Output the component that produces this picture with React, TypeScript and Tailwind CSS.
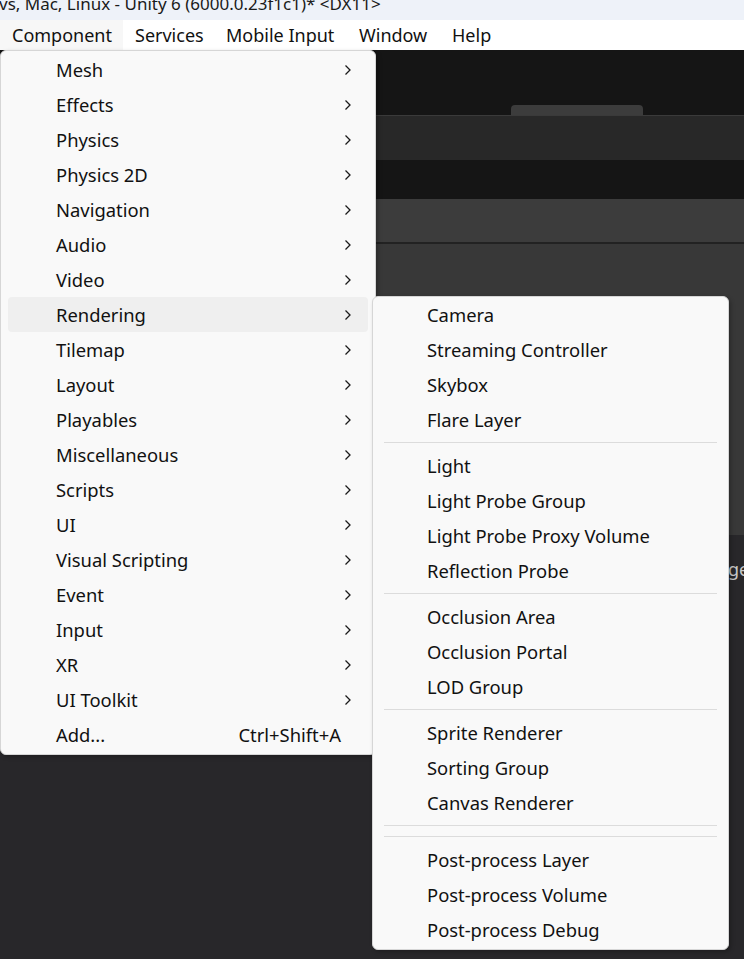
import React from "react";

const mainItems: { label: string; arrow?: boolean; shortcut?: string; active?: boolean }[] = [
  { label: "Mesh", arrow: true },
  { label: "Effects", arrow: true },
  { label: "Physics", arrow: true },
  { label: "Physics 2D", arrow: true },
  { label: "Navigation", arrow: true },
  { label: "Audio", arrow: true },
  { label: "Video", arrow: true },
  { label: "Rendering", arrow: true, active: true },
  { label: "Tilemap", arrow: true },
  { label: "Layout", arrow: true },
  { label: "Playables", arrow: true },
  { label: "Miscellaneous", arrow: true },
  { label: "Scripts", arrow: true },
  { label: "UI", arrow: true },
  { label: "Visual Scripting", arrow: true },
  { label: "Event", arrow: true },
  { label: "Input", arrow: true },
  { label: "XR", arrow: true },
  { label: "UI Toolkit", arrow: true },
  { label: "Add...", shortcut: "Ctrl+Shift+A" },
];

const subGroups: string[][] = [
  ["Camera", "Streaming Controller", "Skybox", "Flare Layer"],
  ["Light", "Light Probe Group", "Light Probe Proxy Volume", "Reflection Probe"],
  ["Occlusion Area", "Occlusion Portal", "LOD Group"],
  ["Sprite Renderer", "Sorting Group", "Canvas Renderer"],
  [],
  ["Post-process Layer", "Post-process Volume", "Post-process Debug"],
];

const font = { fontFamily: '"Noto Sans", "Open Sans", sans-serif' };

function Chevron() {
  return (
    <svg width="8" height="12" viewBox="0 0 8 12" className="shrink-0">
      <polyline points="1.5,1.5 6,6 1.5,10.5" fill="none" stroke="#1a1a1a" strokeWidth="1.3" />
    </svg>
  );
}

function Separator() {
  return (
    <div className="h-[11px] flex items-center px-[11px]">
      <div className="h-px w-full bg-[#dcdcdc]" />
    </div>
  );
}

export default function App() {
  return (
    <div className="relative w-[744px] h-[959px] overflow-hidden bg-[#28272a] text-[#111]" style={font}>
      {/* Title bar */}
      <div className="h-[20px] bg-[#eef2f9] overflow-hidden flex items-start">
        <span className="text-[17px] leading-[20px] -ml-[1px] -mt-[6px] text-[#1a1a1a] whitespace-nowrap">
          vs, Mac, Linux - Unity 6 (6000.0.23f1c1)* &lt;DX11&gt;
        </span>
      </div>
      {/* Menu bar */}
      <div className="h-[30px] bg-white flex items-center text-[18px] text-[#111]">
        <div className="h-full bg-[#f7f7f7] flex items-center pl-[12px] w-[123px]">Component</div>
        <div className="pl-[12px] w-[103px]">Services</div>
        <div className="w-[133px]">Mobile Input</div>
        <div className="w-[93px]">Window</div>
        <div>Help</div>
      </div>
      {/* App background */}
      <div className="flex flex-col">
        <div className="h-[65px] bg-[#151515] flex items-end">
          <div className="ml-[511px] w-[132px] h-[10px] bg-[#3c3c3c] rounded-t-[4px]" />
        </div>
        <div className="h-[45px] bg-[#282828] border-t border-[#3a3a3a]" />
        <div className="h-[39px] bg-[#151515]" />
        <div className="h-[43px] bg-[#3c3c3c]" />
        <div className="h-[2px] bg-[#222]" />
        <div className="h-[291px] bg-[#383838]" />
        <div className="flex-1 h-[424px] flex bg-[#262626]">
          <div className="w-[73px] bg-[#29282b]" />
          <div className="w-[4px] bg-[#222124]" />
          <div className="flex-1 bg-[#29282b]" />
        </div>
      </div>
      <div className="absolute left-[728px] top-[555px] text-[18px] text-[#c8c8c8] leading-[28px]">ge</div>

      {/* Main dropdown */}
      <div className="absolute left-0 top-[50px] w-[376px] bg-[#f9f9f9] border border-[#d6d6d6] rounded-[6px] shadow-[2px_2px_4px_rgba(0,0,0,0.25)] pt-[1px] pb-[2px] text-[18.4px]">
        {mainItems.map((it) => (
          <div
            key={it.label}
            className={
              "h-[35px] mx-[7px] flex items-center pl-[48px] pr-[16px] rounded-[4px] " +
              (it.active ? "bg-[#efefef]" : "")
            }
          >
            <span className="flex-1">{it.label}</span>
            {it.arrow && <Chevron />}
            {it.shortcut && <span className="mr-[11px]">{it.shortcut}</span>}
          </div>
        ))}
      </div>

      {/* Submenu */}
      <div className="absolute left-[372px] top-[296px] w-[357px] bg-[#f9f9f9] border border-[#d6d6d6] rounded-[6px] shadow-[2px_2px_4px_rgba(0,0,0,0.25)] pt-0 pb-[2px] text-[18.4px]">
        {subGroups.map((g, gi) => (
          <div key={gi}>
            {gi > 0 && <Separator />}
            {g.map((s) => (
              <div key={s} className="h-[35px] flex items-center pl-[54px]">
                {s}
              </div>
            ))}
          </div>
        ))}
      </div>
    </div>
  );
}
